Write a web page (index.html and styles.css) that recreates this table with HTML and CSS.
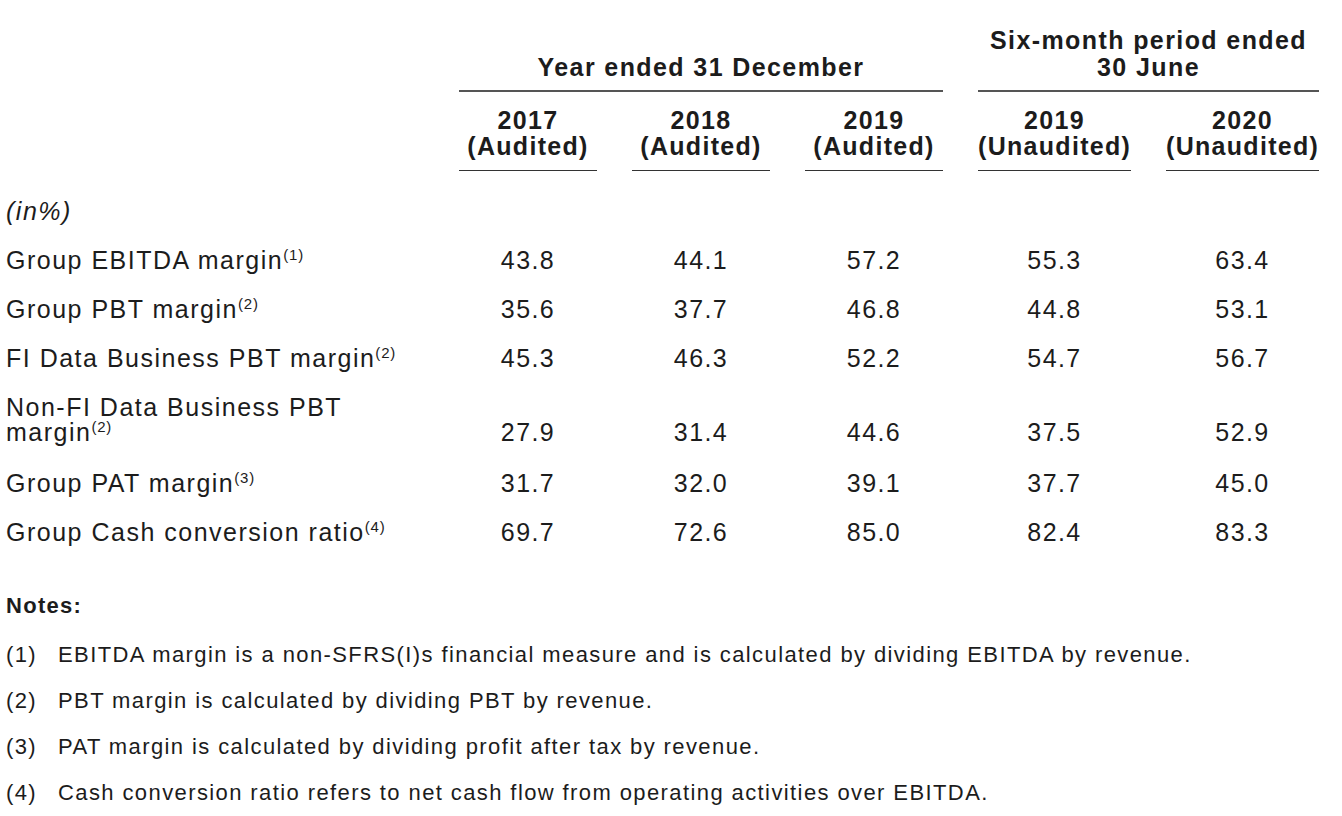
FILE: index.html
```html
<!DOCTYPE html>
<html lang="en">
<head>
<meta charset="utf-8">
<title>Margins</title>
<link rel="stylesheet" href="styles.css">
</head>
<body>
<div class="page">
  <div class="grid">
    <div class="group g-year"><span class="group-text">Year ended 31 December</span></div>
    <div class="group g-six"><span class="group-text">Six-month period ended<br>30 June</span></div>

    <div class="label-head"></div>
    <div class="sub c1">2017<br>(Audited)</div>
    <div class="sub c2">2018<br>(Audited)</div>
    <div class="sub c3">2019<br>(Audited)</div>
    <div class="sub c4">2019<br>(Unaudited)</div>
    <div class="sub c5">2020<br>(Unaudited)</div>

    <div class="label unit">(in%)</div>
    <div class="val"></div><div class="val"></div><div class="val"></div><div class="val"></div><div class="val"></div>

    <div class="label">Group EBITDA margin<sup>(1)</sup></div>
    <div class="val">43.8</div><div class="val">44.1</div><div class="val">57.2</div><div class="val">55.3</div><div class="val">63.4</div>

    <div class="label">Group PBT margin<sup>(2)</sup></div>
    <div class="val">35.6</div><div class="val">37.7</div><div class="val">46.8</div><div class="val">44.8</div><div class="val">53.1</div>

    <div class="label">FI Data Business PBT margin<sup>(2)</sup></div>
    <div class="val">45.3</div><div class="val">46.3</div><div class="val">52.2</div><div class="val">54.7</div><div class="val">56.7</div>

    <div class="label tall">Non-FI Data Business PBT<br>margin<sup>(2)</sup></div>
    <div class="val tall">27.9</div><div class="val tall">31.4</div><div class="val tall">44.6</div><div class="val tall">37.5</div><div class="val tall">52.9</div>

    <div class="label">Group PAT margin<sup>(3)</sup></div>
    <div class="val">31.7</div><div class="val">32.0</div><div class="val">39.1</div><div class="val">37.7</div><div class="val">45.0</div>

    <div class="label">Group Cash conversion ratio<sup>(4)</sup></div>
    <div class="val">69.7</div><div class="val">72.6</div><div class="val">85.0</div><div class="val">82.4</div><div class="val">83.3</div>
  </div>

  <div class="notes">
    <div class="notes-title">Notes:</div>
    <div class="note"><span class="num">(1)</span><span class="txt">EBITDA margin is a non-SFRS(I)s financial measure and is calculated by dividing EBITDA by revenue.</span></div>
    <div class="note"><span class="num">(2)</span><span class="txt">PBT margin is calculated by dividing PBT by revenue.</span></div>
    <div class="note"><span class="num">(3)</span><span class="txt">PAT margin is calculated by dividing profit after tax by revenue.</span></div>
    <div class="note"><span class="num">(4)</span><span class="txt">Cash conversion ratio refers to net cash flow from operating activities over EBITDA.</span></div>
  </div>
</div>
</body>
</html>
```

FILE: styles.css
```css
html, body {
  margin: 0;
  padding: 0;
  background: #ffffff;
}

body {
  font-family: "Liberation Sans", Arial, sans-serif;
  color: #1c1c1c;
  font-size: 25px;
  letter-spacing: 1.4px;
}

.page {
  padding: 27px 0 0 6px;
}

.grid {
  display: grid;
  grid-template-columns: 418px 138px 138px 138px 153px 153px;
  column-gap: 35px;
  align-items: end;
}

.group {
  border-bottom: 2px solid #555;
  text-align: center;
  font-weight: bold;
  font-size: 25px;
  line-height: 27px;
  padding-bottom: 9px;
  letter-spacing: 1.4px;
}

.g-year {
  grid-column: 2 / 5;
}

.g-six {
  grid-column: 5 / 7;
}

.label-head {
  grid-column: 1;
}

.sub {
  text-align: center;
  font-weight: bold;
  font-size: 25px;
  line-height: 26px;
  border-bottom: 1px solid #333;
  padding: 15px 0 11px;
  white-space: nowrap;
  letter-spacing: 1.3px;
}

.label {
  line-height: 25px;
  padding: 12px 0;
  letter-spacing: 1.5px;
}

.unit {
  font-style: italic;
  padding-top: 28px;
}

.val {
  text-align: center;
  line-height: 25px;
  padding: 12px 0;
  letter-spacing: 1.4px;
}

.tall {
  padding-bottom: 14px;
}

sup {
  font-size: 15px;
  line-height: 0;
  vertical-align: 9px;
  letter-spacing: 0.8px;
}

.notes {
  padding-top: 36px;
}

.notes-title {
  font-weight: bold;
  font-size: 22px;
  line-height: 25px;
  padding-bottom: 14px;
  letter-spacing: 1.3px;
}

.note {
  display: flex;
  font-size: 22px;
  line-height: 26px;
  padding: 10px 0;
  letter-spacing: 1.4px;
}

.num {
  width: 52px;
  flex: none;
}
```
